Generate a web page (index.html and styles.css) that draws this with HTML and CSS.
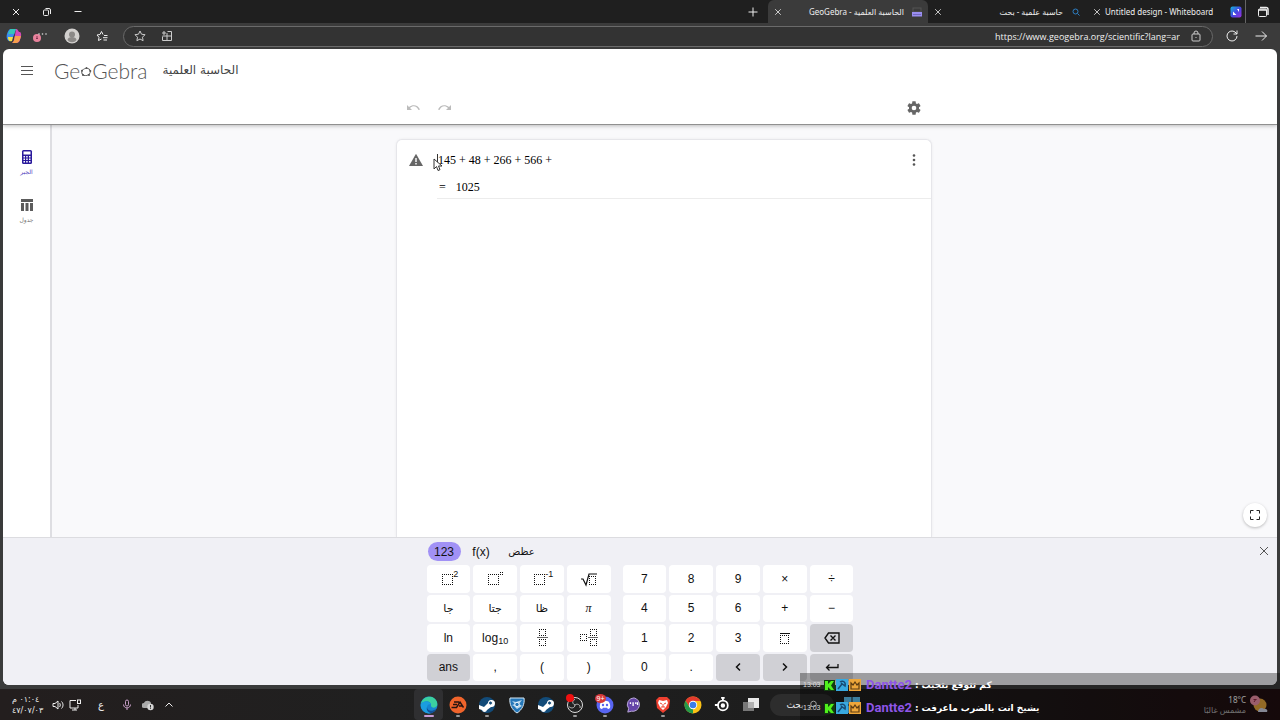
FILE: index.html
```html
<!DOCTYPE html>
<html lang="ar">
<head>
<meta charset="utf-8">
<title>الحاسبة العلمية - GeoGebra</title>
<link rel="stylesheet" href="styles.css">
</head>
<body>
<header class="tabbar">
  <div class="window-controls">
    <button aria-label="إغلاق"><svg class="i10" viewBox="0 0 10 10"><path d="M2 2l6 6M8 2l-6 6"/></svg></button>
    <button aria-label="استعادة"><svg class="i10" viewBox="0 0 10 10"><rect x="1.500" y="3" width="5" height="5.500" rx="1"/><path d="M3.500 1.500h3.500a1.500 1.500 0 0 1 1.500 1.500v4"/></svg></button>
    <button aria-label="تصغير"><svg class="i10" viewBox="0 0 10 10"><path d="M1.500 4.500h7"/></svg></button>
  </div>
  <nav class="tabs">
    <button class="new-tab" aria-label="جديد"><svg class="i10" viewBox="0 0 10 10"><path d="M5 .5v9M.5 5h9"/></svg></button>
    <div class="tab active">
      <button aria-label="إغلاق"><svg class="i8" viewBox="0 0 10 10"><path d="M1.500 1.500l7 7M8.500 1.500l-7 7"/></svg></button>
      <span class="tab-title" dir="rtl">الحاسبة العلمية - GeoGebra</span>
      <svg class="i10" viewBox="0 0 10 10"><rect x="1" y="1" width="8" height="4" stroke="#555"/><path d="M0 5h10v4.500H0z" fill="#9a8ef0" stroke="none"/><path d="M1.500 7.500h7" stroke="#4a4090" stroke-dasharray="1 1"/></svg>
    </div>
    <div class="tab">
      <button aria-label="إغلاق"><svg class="i8" viewBox="0 0 10 10"><path d="M1.500 1.500l7 7M8.500 1.500l-7 7"/></svg></button>
      <span class="tab-title" dir="rtl">حاسبة علمية - بحث</span>
      <svg class="i10" viewBox="0 0 10 10" stroke="#2d7fc4"><circle cx="4.500" cy="4.500" r="2.500"/><path d="M6.500 6.500l2 2"/></svg>
    </div>
    <div class="tab">
      <button aria-label="إغلاق"><svg class="i8" viewBox="0 0 10 10"><path d="M1.500 1.500l7 7M8.500 1.500l-7 7"/></svg></button>
      <span class="tab-title start">Untitled design - Whiteboard</span>
      <svg class="i12" viewBox="0 0 12 12" stroke="none"><defs><linearGradient id="wb" x1="0" x2="1" y2="1"><stop stop-color="#12b8dd"/><stop offset=".5" stop-color="#4548e0"/><stop offset="1" stop-color="#9b2fe0"/></linearGradient></defs><rect x=".5" y=".5" width="11" height="11" rx="2" fill="url(#wb)"/><path d="M3 9V5.500L6.500 9zM7 3h2v3z" fill="#fff"/></svg>
    </div>
    <button class="workspace" aria-label="مساحات العمل"><svg class="i12" viewBox="0 0 12 12"><rect x="1.500" y="3" width="8" height="7.500" rx="1"/><path d="M3 1.500h6A2 2 0 0 1 11 3.500V9M1.500 4h8" stroke-width="1.500"/></svg></button>
  </nav>
</header>
<div class="addressbar">
  <div class="address-left">
    <button aria-label="Copilot"><svg class="i16" viewBox="0 0 16 16" stroke="none"><path d="M5 1h5l-2 6-3 6C1 14 0 9 1 6c1-3 2-5 4-5z" fill="#3b8df0"/><path d="M5 1h5l-2 5H2c1-3 2-5 3-5z" fill="#35c5b8"/><path d="M10 1c2 0 2 2 3 3h1c2 1 1 6 0 8-1 3-3 3-5 3H6c2-1 2-4 3-8z" fill="#d44ab8"/><path d="M9 8h6c-1 4-2 7-5 7H6c2-1 2-3 3-7z" fill="#f6a04b"/><path d="M2 9h5l-1 4c-3 1-4-1-4-4z" fill="#efe04a"/></svg></button>
    <button aria-label="المزيد"><svg class="i16" viewBox="0 0 16 16" stroke="none"><circle cx="5" cy="10" r="4" fill="#e8829c"/><path d="M5 8v3M4 10l1 1 1-1" stroke="#833450" fill="none"/><circle cx="7" cy="6" r=".8" fill="#ddd"/><circle cx="10.500" cy="6" r=".8" fill="#ddd"/><circle cx="14" cy="6" r=".8" fill="#ddd"/></svg></button>
    <button aria-label="الحساب"><svg class="i16" viewBox="0 0 16 16" stroke="none"><circle cx="8" cy="8" r="7.500" fill="#d2d0ce"/><circle cx="8" cy="6.500" r="3" fill="#8b8987"/><path d="M3.500 12c0-4 9-4 9 0-2 3-7 3-9 0z" fill="#8b8987"/></svg></button>
    <button aria-label="المفضلة"><svg class="i12" viewBox="0 0 12 12"><path d="M7 4.500L5.500 1.500 4 4.500 1 5l2 2.300-.5 3.200L5.500 9M8 5.500h3.500M7 7.700h4.500M7.500 10H11"/></svg></button>
  </div>
  <div class="url-box">
    <button aria-label="إضافة إلى المفضلة"><svg class="i12" viewBox="0 0 12 12"><path d="M6 1l1.500 3.200 3.500.5-2.500 2.500.6 3.500L6 9l-3.100 1.700.6-3.500L1 4.700l3.500-.5z"/></svg></button>
    <button aria-label="تطبيق"><svg class="i12" viewBox="0 0 12 12"><path d="M1.500 6.500v4h9v-9h-4M6 3v7.500M1.500 6H10.500M3 1v4M1 3h4"/></svg></button>
    <input class="url" aria-label="العنوان" value="https://www.geogebra.org/scientific?lang=ar">
    <svg class="i12" viewBox="0 0 12 12"><rect x="2" y="4" width="8" height="7" rx="1"/><path d="M4 4V3a2 2 0 0 1 4 0v1M6 7v1"/></svg>
  </div>
  <div class="address-right">
    <button aria-label="تحديث"><svg class="i14" viewBox="0 0 14 14"><path d="M12 7a5 5 0 1 1-2-4l2 2M12 1.500V5H8.500"/></svg></button>
    <button aria-label="رجوع"><svg class="i14" viewBox="0 0 14 14"><path d="M1.500 7h11M8 2.500L12.500 7 8 11.500"/></svg></button>
  </div>
</div>

<main class="page">
  <header class="app-header">
    <div class="brand-row">
      <button class="menu" aria-label="القائمة"><svg class="i12" viewBox="0 0 12 12"><path d="M0 2.500h12M0 6.500h12M0 10.500h12"/></svg></button>
      <a class="logo" href="#" aria-label="GeoGebra"><span>Ge</span><svg class="logo-o" viewBox="0 0 12 12"><ellipse cx="6" cy="6" rx="4.300" ry="3.500" transform="rotate(-15 6 6)"/><g fill="#555" stroke="none"><circle cx="6.500" cy="2" r="1"/><circle cx="10.300" cy="5" r="1"/><circle cx="9" cy="9" r="1"/><circle cx="3" cy="9" r="1"/><circle cx="2" cy="4.800" r="1"/></g></svg><span>Gebra</span></a>
      <h1 class="app-name" dir="rtl">الحاسبة العلمية</h1>
    </div>
    <div class="tools-row">
      <div class="tools">
        <button aria-label="تراجع"><svg class="i16" viewBox="0 0 16 16"><path d="M2 5v5h5L5 8c3-3 7-2 8.500 2l1.500-.5C13 4.500 7.500 4 4 7z" fill="#bbb" stroke="none"/></svg></button>
        <button aria-label="إعادة"><svg class="i16" viewBox="0 0 16 16"><path d="M14 5v5H9l2-2c-3-3-7-2-8.500 2L1 9.500C3 4.500 8.500 4 12 7z" fill="#bbb" stroke="none"/></svg></button>
        <button class="settings" aria-label="الإعدادات"><svg class="i16" viewBox="0 0 24 24" stroke="none"><path fill="#666" d="M19.430 12.980c.04-.32.07-.64.07-.98s-.03-.66-.07-.98l2.110-1.650c.19-.15.24-.42.12-.64l-2-3.460c-.12-.22-.39-.3-.61-.22l-2.490 1c-.52-.4-1.080-.73-1.690-.98l-.38-2.650A.49.49 0 0 0 14 2h-4c-.25 0-.46.18-.49.42l-.38 2.650c-.61.25-1.170.59-1.690.98l-2.490-1c-.23-.09-.49 0-.61.22l-2 3.460c-.13.22-.07.49.12.64l2.110 1.650c-.04.32-.07.65-.07.98s.03.66.07.98l-2.110 1.650c-.19.15-.24.42-.12.64l2 3.460c.12.22.39.3.61.22l2.490-1c.52.4 1.080.73 1.690.98l.38 2.650c.03.24.24.42.49.42h4c.25 0 .46-.18.49-.42l.38-2.650c.61-.25 1.170-.59 1.690-.98l2.490 1c.23.09.49 0 .61-.22l2-3.460c.12-.22.07-.49-.12-.64zM12 15.500a3.500 3.500 0 1 1 0-7 3.500 3.500 0 0 1 0 7z"/></svg></button>
      </div>
    </div>
  </header>
  <div class="workarea">
    <nav class="sidebar">
      <button class="side selected"><svg class="i14" viewBox="0 0 14 14" stroke="none"><rect x="2" y="0" width="10" height="14" rx="1.500" fill="#2a1a9c"/><path d="M3.500 1.500h7v3h-7zM3.500 6h1.500v1.500H3.500zM6.200 6h1.500v1.500H6.200zM9 6h1.500v1.500H9zM3.500 8.500h1.500v1.500H3.500zM6.200 8.500h1.500v1.500H6.200zM9 8.500h1.500v1.500H9zM3.500 11h1.500v1.500H3.500zM6.200 11h1.500v1.500H6.200zM9 11h1.500v1.500H9z" fill="#fff"/></svg><span>الجبر</span></button>
      <button class="side"><svg class="i14" viewBox="0 0 14 14" stroke="none"><path d="M1 1h12v3H1zM1 5h3v8H1zM5.500 5h3v8h-3zM10 5h3v8h-3z" fill="#5c5c5c"/></svg><span>جدول</span></button>
    </nav>
    <div class="canvas">
      <section class="card">
        <div class="expr">
          <svg class="i14" viewBox="0 0 14 14" stroke="none"><path d="M7 .8L14 13H0z" fill="#666"/><path d="M6.300 5h1.400v4H6.300zM6.300 10h1.400v1.400H6.300z" fill="#fff"/></svg>
          <div class="math"><span>145</span><span>+</span><span>48</span><span>+</span><span>266</span><span>+</span><span>566</span><span>+</span></div>
          <button aria-label="المزيد"><svg class="i14" viewBox="0 0 14 14" stroke="none" fill="#555"><circle cx="7" cy="2.500" r="1.300"/><circle cx="7" cy="7" r="1.300"/><circle cx="7" cy="11.500" r="1.300"/></svg></button>
          <svg class="pointer" viewBox="0 0 10 18"><path d="M4.500 0v11" stroke="#333"/><path d="M1 5v10l2.500-2.500L5 16.500l2-.8L5.500 12H9z" fill="#fff" stroke="#333"/></svg>
        </div>
        <div class="result"><span>=</span><span>1025</span></div>
      </section>
      <button class="fullscreen" aria-label="ملء الشاشة"><svg class="i12" viewBox="0 0 12 12"><path d="M1.500 4.500V1.500h3M7.500 1.500h3v3M10.500 7.500v3h-3M4.500 10.500h-3v-3"/></svg></button>
    </div>
  </div>
  <section class="keyboard">
    <button class="close-kb" aria-label="إغلاق"><svg class="i12" viewBox="0 0 12 12"><path d="M2 2l8 8M10 2l-8 8"/></svg></button>
    <div class="kb">
      <div class="kb-tabs"><button class="on">123</button><button>f(x)</button><button class="ar">عظض</button></div>
      <div class="pads">
        <div class="pad four">
          <button aria-label="مربع"><svg class="i20" viewBox="0 0 20 20"><rect class="dot" x="4.500" y="5.500" width="10" height="10"/></svg><sup>2</sup></button>
          <button aria-label="أس"><svg class="i20" viewBox="0 0 20 20"><rect class="dot" x="3.500" y="5.500" width="10" height="10"/><rect class="dot" x="15.500" y="3.500" width="2" height="2"/></svg></button>
          <button aria-label="مقلوب"><svg class="i20" viewBox="0 0 20 20"><rect class="dot" x="4.500" y="5.500" width="10" height="10"/></svg><sup>-1</sup></button>
          <button aria-label="جذر"><svg class="i20" viewBox="0 0 20 20"><path d="M2 10h2l3 6 3-11h8" stroke-width="1.200"/><rect class="dot" x="10.500" y="7.500" width="6" height="8"/></svg></button>
          <button class="ar">جا</button><button class="ar">جتا</button><button class="ar">ظا</button><button class="pi">π</button>
          <button>ln</button><button>log<sub>10</sub></button>
          <button aria-label="كسر"><svg class="i20" viewBox="0 0 20 20"><rect class="dot" x="7.500" y="1.500" width="6" height="6"/><path d="M5 9.500h11" stroke="#666"/><rect class="dot" x="7.500" y="11.500" width="6" height="6"/></svg></button>
          <button aria-label="عدد كسري"><svg class="i20" viewBox="0 0 20 20"><rect class="dot" x="1.500" y="6.500" width="6" height="6"/><rect class="dot" x="11.500" y="1.500" width="6" height="6"/><path d="M9 9.500h10" stroke="#666"/><rect class="dot" x="11.500" y="11.500" width="6" height="6"/></svg></button>
          <button class="gray">ans</button><button>,</button><button>(</button><button>)</button>
        </div>
        <div class="pad five">
          <button>7</button><button>8</button><button>9</button><button>×</button><button>÷</button>
          <button>4</button><button>5</button><button>6</button><button>+</button><button>−</button>
          <button>1</button><button>2</button><button>3</button>
          <button aria-label="دوري"><svg class="i20" viewBox="0 0 20 20"><path d="M5 5.500h10"/><rect class="dot" x="5.500" y="7.500" width="8" height="8"/></svg></button>
          <button class="gray" aria-label="حذف"><svg class="i20" viewBox="0 0 20 20"><path d="M6.500 5h10.500v10H6.500L3 10zM8.500 7.500l5 5M13.500 7.500l-5 5" stroke-width="1.400"/></svg></button>
          <button>0</button><button>.</button>
          <button class="gray" aria-label="يسار"><svg class="i20" viewBox="0 0 20 20"><path d="M12 6.500L8.500 10l3.500 3.500" stroke-width="1.500"/></svg></button>
          <button class="gray" aria-label="يمين"><svg class="i20" viewBox="0 0 20 20"><path d="M8 6.500l3.500 3.500L8 13.500" stroke-width="1.500"/></svg></button>
          <button class="gray" aria-label="إدخال"><svg class="i20" viewBox="0 0 20 20"><path d="M16 7v3.500H4.500M7.500 7.500l-3 3 3 3" stroke-width="1.300"/></svg></button>
        </div>
      </div>
    </div>
  </section>
</main>

<footer class="taskbar">
  <div class="tray">
    <div class="clock"><span dir="rtl">٠١:٠٤ م</span><span>٤٧/٠٧/٠٣</span></div>
    <svg class="i12" viewBox="0 0 12 12"><path d="M1 4.500h2L6 2v8L3 7.500H1zM7.500 4c1 1 1 3 0 4M9.500 2.500c2 2 2 5 0 7"/></svg>
    <svg class="i12 monitor" viewBox="0 0 12 12"><path d="M7 1.500H1v7.500h8V6M3 11h5M6 9v2"/><rect x="8.500" y="1" width="3" height="3.500"/></svg>
    <span class="lang">ع</span>
    <svg class="i12" viewBox="0 0 12 12" stroke="#c9a0c9"><rect x="4.500" y="1" width="3" height="6" rx="1.500"/><path d="M2.500 5.500c0 4.500 7 4.500 7 0M6 9v2"/></svg>
    <svg class="i12" viewBox="0 0 12 12" stroke="none"><path d="M2 9a2.500 2.500 0 0 1 0-5c1-3 6-3 7 0v5z" fill="#aaa"/><circle cx="8.500" cy="8" r="3.200" fill="#d5d5d5"/><path d="M8.500 6v2.500M8.500 9.200v.8" stroke="#333"/></svg>
    <svg class="i12" viewBox="0 0 12 12"><path d="M2.500 7.500L6 4l3.500 3.500"/></svg>
  </div>
  <div class="dock">
    <div class="apps">
      <button class="app current" aria-label="Edge"><svg class="i18" viewBox="0 0 18 18" stroke="none"><circle cx="9" cy="9" r="8.500" fill="#1685d1"/><path d="M1 8C2 2 7 0 11 .8c5 1 7 6 6 9-2 3-6 2-6 0 1-5-7-6-10-1.800z" fill="#3bd0a0"/><path d="M1 8c3-4 9-3 10 .5-2-1-4 0-4 3 0 3 3 5 5 5.500C5 19-.5 13 1 8z" fill="#1b9de0"/><path d="M7 11c0 4 5 5 9 2-1 2-3 4-5 4.200-3-1-5-3-4-6.200z" fill="#124f98"/></svg></button>
      <button class="app run" aria-label="EA"><svg class="i18" viewBox="0 0 18 18" stroke="none"><circle cx="9" cy="9" r="8.500" fill="#f0642b"/><path d="M5 6h5M4 8.500h4M2.500 11.500h5L11 6l3.500 5.500M10 10h4" stroke="#251310" stroke-width="1.400" fill="none"/></svg></button>
      <button class="app run" aria-label="Steam"><svg class="i18" viewBox="0 0 18 18" stroke="none"><circle cx="9" cy="9" r="8" fill="#124b79"/><path d="M1 9l5 2 4-4a3.500 3.500 0 1 1 3 4l-4 3a2.600 2.600 0 0 1-5 0l-3-1z" fill="#fff"/><circle cx="12.500" cy="7" r="2" fill="#124b79" stroke="#fff"/></svg></button>
      <button class="app" aria-label="Rocket League"><svg class="i18" viewBox="0 0 18 18"><path d="M2 2h14c1 6-2 12-7 15C4 14 1 8 2 2z" fill="#2477b9" stroke="#d7e8f4"/><path d="M4 5l4 1 6-2-3 4 3 2-5 3-3-3-2-1 3-1z" fill="#b9d9ee" stroke="none"/><circle cx="9" cy="8.500" r="2.200" fill="#2477b9" stroke="#e8f3fa"/></svg></button>
      <button class="app" aria-label="Steam"><svg class="i18" viewBox="0 0 18 18" stroke="none"><circle cx="9" cy="9" r="8" fill="#124b79"/><path d="M1 9l5 2 4-4a3.500 3.500 0 1 1 3 4l-4 3a2.600 2.600 0 0 1-5 0l-3-1z" fill="#fff"/><circle cx="12.500" cy="7" r="2" fill="#124b79" stroke="#fff"/></svg></button>
      <button class="app run" aria-label="OBS"><svg class="i18" viewBox="0 0 18 18"><circle cx="9" cy="9" r="7.500" fill="#222" stroke="#ddd"/><path d="M9 9C6 8 6 4 9 3.500M9 9c2-2 6 0 5 3M9 9c0 3-4 4-6 1.500" stroke="#bbb"/></svg><i class="badge"></i></button>
      <button class="app run" aria-label="Discord"><svg class="i18" viewBox="0 0 18 18" stroke="none"><circle cx="9" cy="9" r="8.500" fill="#5865f2"/><path d="M5.500 5.500c2-1 5-1 7 0 1.500 2 2 4 1.500 6.500-2 1.500-2.500 1-3-.2H7c-.5 1.200-1 1.700-3 .2-.5-2.500 0-4.500 1.500-6.500z" fill="#fff"/><circle cx="7" cy="9" r="1.200" fill="#5865f2"/><circle cx="11" cy="9" r="1.200" fill="#5865f2"/></svg><span class="badge count">9+</span></button>
      <button class="app" aria-label="Chat"><svg class="i16" viewBox="0 0 18 18"><path d="M9 1a7.500 7.500 0 1 1-3 15l-4 1 1-4A7.500 7.500 0 0 1 9 1z" fill="#6544a8" stroke="#c7b6e5"/><path d="M5 6v2M8 6v4M11 6v2M13 6v3" stroke="#fff" stroke-width="1.500"/></svg></button>
      <button class="app run" aria-label="Brave"><svg class="i18" viewBox="0 0 18 18" stroke="none"><path d="M5 1h8l3 3-1 8-6 5-6-5-1-8z" fill="#ef4030"/><path d="M5 4l4 1 4-1 1 3-2 4-3 3-3-3-2-4z" fill="#fff"/><path d="M6 7l2 1M12 7l-2 1M9 8v3M7 11h4" stroke="#ef4030"/></svg></button>
      <button class="app" aria-label="Chrome"><svg class="i18" viewBox="0 0 18 18" stroke="none"><circle cx="9" cy="9" r="8.500" fill="#fbc116"/><path d="M1.600 4.800A8.500 8.500 0 0 1 16.400 5H9L5.500 11z" fill="#e33b2e"/><path d="M1.600 4.800L5.500 11l3.500 2v4.500A8.500 8.500 0 0 1 1.600 4.800z" fill="#229a4b"/><circle cx="9" cy="9" r="4.200" fill="#fff"/><circle cx="9" cy="9" r="3.300" fill="#3b7de8"/></svg></button>
      <button class="app" aria-label="SteelSeries"><svg class="i16" viewBox="0 0 18 18" stroke="#fff" stroke-width="2"><circle cx="10" cy="9.500" r="5.500"/><circle cx="10" cy="9.500" r="1.500" fill="#fff"/><path d="M1 9h4M10 1v3M8 1h4"/></svg></button>
      <button class="app" aria-label="عرض المهام"><svg class="i18" viewBox="0 0 18 18" stroke="none"><path d="M1 6h11v9H1z" fill="#777"/><path d="M6 2h11v10H6z" fill="#e8e8e8"/><path d="M6 6h6v6H6z" fill="#b0b0b0"/></svg></button>
    </div>
    <button class="search"><span>بحث</span><svg class="i10" viewBox="0 0 10 10"><circle cx="5.500" cy="4" r="2.800"/><path d="M3.500 6L1 8.500"/></svg></button>
    <button class="start" aria-label="ابدأ"><svg class="i16" viewBox="0 0 16 16" stroke="none"><path d="M0 0h7.500v7.500H0zM8.500 0H16v7.500H8.500zM0 8.500h7.500V16H0zM8.500 8.500H16V16H8.500z" fill="#5cc0ee"/></svg></button>
  </div>
  <div class="weather">
    <div><span>18°C</span><span class="dim" dir="rtl">مشمس غالبًا</span></div>
    <svg class="i20" viewBox="0 0 20 20" stroke="none"><circle cx="11" cy="10" r="6.500" fill="#e0a23a"/><path d="M9 17c0-4 4-5 6-3 3-1 4 2 3 3z" fill="#c9cde0"/><circle cx="6" cy="5.500" r="5" fill="#ea8ea4"/><path d="M5 7l2-3M4.500 4.500h3" stroke="#8e2944"/></svg>
  </div>
</footer>

<aside class="chat">
  <p><time>13:03</time><svg class="badges" viewBox="0 0 38 12" stroke="none"><path d="M0 1h11v11H0z" fill="#123c10"/><path d="M1 2h3v3l3-3h3L7 6.500l3 4.500H7L4 8v3H1z" fill="#50f01c"/><path d="M12 0h12v12H12z" fill="#38a9e0"/><path d="M14 10l4-5M16 3c3-2 6 0 5 4l-4-3" fill="none" stroke="#174a74" stroke-width="1.500"/><path d="M25 0h12v12H25z" fill="#eda63a"/><path d="M27 4l2 2 2-3 2 3 2-2v6h-8z" fill="none" stroke="#5b3b12" stroke-width="1.200"/></svg><b>Dantte2</b><span>:</span><span dir="rtl">كم تتوقع بتجيب</span></p>
  <p><time>13:03</time><svg class="badges" viewBox="0 0 38 12" stroke="none"><path d="M0 1h11v11H0z" fill="#123c10"/><path d="M1 2h3v3l3-3h3L7 6.500l3 4.500H7L4 8v3H1z" fill="#50f01c"/><path d="M12 0h12v12H12z" fill="#38a9e0"/><path d="M14 10l4-5M16 3c3-2 6 0 5 4l-4-3" fill="none" stroke="#174a74" stroke-width="1.500"/><path d="M25 0h12v12H25z" fill="#eda63a"/><path d="M27 4l2 2 2-3 2 3 2-2v6h-8z" fill="none" stroke="#5b3b12" stroke-width="1.200"/></svg><b>Dantte2</b><span>:</span><span dir="rtl">يشيخ انت بالضرب ماعرفت</span></p>
</aside>
</body>
</html>
```
FILE: styles.css
```css
* { box-sizing: border-box; }
body {
  margin: 0;
  min-height: 100vh;
  display: flex;
  flex-direction: column;
  position: relative;
  background: #3a3b3b;
  font-family: "Liberation Sans", "DejaVu Sans", sans-serif;
  font-size: 12px;
  color: #eee;
}
button {
  background: none;
  border: 0;
  padding: 0;
  margin: 0;
  color: inherit;
  font: inherit;
  display: flex;
  align-items: center;
  justify-content: center;
}
svg { display: block; flex: none; }
svg:not([fill]) { fill: none; }
svg:not([stroke]) { stroke: currentColor; }
.i8 { width: 8px; height: 8px; }
.i10 { width: 10px; height: 10px; }
.i12 { width: 12px; height: 12px; }
.i14 { width: 14px; height: 14px; }
.i16 { width: 16px; height: 16px; }
.i18 { width: 18px; height: 18px; }
.i20 { width: 20px; height: 20px; }

/* Browser chrome */
.tabbar {
  height: 23px;
  display: flex;
  justify-content: space-between;
  background: #1f1f1f;
}
.window-controls { display: flex; }
.window-controls button { width: 31px; }
.tabs { display: flex; }
.new-tab { width: 31px; }
.tab {
  width: 159px;
  display: flex;
  align-items: center;
  gap: 4px;
  padding: 0 6px;
}
.tab.active { width: 160px; background: #3b3b3b; border-radius: 6px 6px 0 0; }
.tab-title {
  flex: 1;
  font: 8px "Noto Sans", "DejaVu Sans", sans-serif;
  white-space: nowrap;
}
.tab-title[dir="rtl"] { padding-right: 4px; }
.tab-title.start { text-align: left; }
.tab:last-of-type { padding-right: 3px; border-right: 1px solid #666; }
.workspace { width: 34px; }
.addressbar {
  height: 26px;
  display: flex;
  align-items: center;
  background: #3b3b3b;
}
.address-left { display: flex; width: 123px; padding-left: 6px; gap: 16px; align-items: center; }
.address-left button:nth-child(2) { margin-left: -6px; }
.url-box {
  flex: 1;
  height: 21px;
  display: flex;
  align-items: center;
  gap: 15px;
  padding: 0 10px;
  border: 1px solid #6a6a6a;
  border-radius: 11px;
  background: #333;
  color: #ccc;
}
.url {
  flex: 1;
  min-width: 0;
  margin-right: -5px;
  background: none;
  border: 0;
  padding: 0;
  color: #f0f0f0;
  font: 9px "Open Sans", sans-serif;
  text-align: right;
}
.address-right { display: flex; width: 67px; padding-left: 12px; gap: 15px; }

/* Calculator page */
.page {
  flex: 1;
  margin: 0 3px 4px;
  display: flex;
  flex-direction: column;
  overflow: hidden;
  border-radius: 6px;
  background: #fff;
  color: #222;
}
.app-header {
  height: 76px;
  position: relative;
  z-index: 1;
  border-bottom: 1px solid #909090;
  box-shadow: 0 1px 4px rgba(0, 0, 0, .25);
}
.brand-row { display: flex; align-items: center; height: 42px; padding-left: 18px; }
.menu { color: #555; }
.logo {
  display: flex;
  align-items: center;
  margin-left: 21px;
  color: #555;
  font: 300 21px Lato, sans-serif;
  text-decoration: none;
}
.logo-o { width: 12px; height: 12px; margin-top: 4px; }
.app-name { margin: 0 0 0 15px; font: 12px "DejaVu Sans", sans-serif; color: #444; }
.tools-row { padding-left: 48px; }
.tools {
  width: 534px;
  max-width: 100%;
  height: 34px;
  margin: 0 auto;
  padding: 0 9px 0 8px;
  display: flex;
  align-items: center;
  gap: 16px;
}
.settings { margin-left: auto; }
.workarea { flex: 1; display: flex; }
.sidebar {
  width: 49px;
  padding-top: 25px;
  display: flex;
  flex-direction: column;
  align-items: center;
  gap: 22px;
  border-right: 2px solid #dedee2;
}
.side { flex-direction: column; gap: 3px; font: 6px "DejaVu Sans", sans-serif; line-height: 9px; color: #777; }
.side.selected { color: #5040c0; }
.canvas {
  flex: 1;
  position: relative;
  display: flex;
  justify-content: center;
  padding: 14px 1px 0 0;
  background: #f9f9fb;
}
.card {
  width: 536px;
  max-width: 100%;
  background: #fff;
  border: 1px solid #e6e6ea;
  border-bottom: 0;
  border-radius: 6px 6px 0 0;
  box-shadow: 0 0 3px rgba(0, 0, 0, .06);
}
.expr {
  position: relative;
  height: 40px;
  display: flex;
  align-items: center;
  padding: 0 10px 0 12px;
}
.math { flex: 1; margin-left: 15px; display: flex; gap: 3px; }
.math, .result { font: 12px "Liberation Serif", serif; color: #000; }
.pointer { position: absolute; left: 36px; top: 14px; width: 10px; height: 18px; }
.result {
  margin-left: 40px;
  padding-left: 2px;
  height: 19px;
  display: flex;
  gap: 10px;
  border-bottom: 1px solid #ececec;
}
.fullscreen {
  position: absolute;
  right: 10px;
  bottom: 10px;
  width: 24px;
  height: 24px;
  border-radius: 50%;
  background: #fff;
  box-shadow: 0 1px 3px rgba(0, 0, 0, .25);
}

/* Keypad */
.keyboard {
  position: relative;
  display: flex;
  justify-content: center;
  padding: 4px 0;
  border-top: 1px solid #dcdce0;
  background: #f0f0f5;
}
.close-kb { position: absolute; right: 7px; top: 7px; color: #555; }
.kb { width: 427px; }
.kb-tabs { display: flex; gap: 4px; height: 19px; padding-left: 1px; color: #111; }
.kb-tabs button { width: 33px; border-radius: 10px; }
.kb-tabs .on { background: #a191f5; }
.ar { font-family: "DejaVu Sans", sans-serif; font-size: 10px; }
.kb-tabs .ar { width: 40px; }
.pads { display: flex; gap: 12px; padding-top: 4px; }
.pad { height: 116px; display: grid; grid-template-rows: repeat(4, 1fr); gap: 2px 3px; }
.four { flex: 184; grid-template-columns: repeat(4, 1fr); }
.five { flex: 231; grid-template-columns: repeat(5, 1fr); }
.pad button {
  min-width: 0;
  border-radius: 4px;
  background: #fff;
  color: #111;
  font-size: 12px;
}
.pad .ar { font-size: 11px; }
.pad .gray { background: #d0d0d5; }
.pad .pi { font-family: "Liberation Serif", serif; font-style: italic; }
.pad sup, .pad sub { font-size: 9px; line-height: 10px; }
.pad sup { align-self: flex-start; margin: 4px 0 0 -5px; }
.pad sub { margin-top: 7px; }
.dot { stroke-dasharray: 1 1; stroke-dashoffset: .5; shape-rendering: crispEdges; }

/* Taskbar */
.taskbar {
  height: 31px;
  display: grid;
  grid-template-columns: 1fr 452px 1fr;
  background: linear-gradient(90deg, #231e1e, #202020 30%, #1c1c1c 70%, #200e10);
}
.tray { display: flex; align-items: center; gap: 5px; padding-left: 12px; }
.clock { width: 34px; font: 8px "DejaVu Sans", sans-serif; line-height: 11px; display: flex; flex-direction: column; margin-right: 1px; white-space: nowrap; }
.clock span:first-child { text-align: left; }
.lang { width: 30px; text-align: center; font: 10px "DejaVu Sans", sans-serif; }
.tray svg { margin-right: 4px; }
.tray .monitor, .tray .clock + svg { margin-right: 0; }
.dock { display: grid; grid-template-columns: 352px 64px 28px; column-gap: 4px; align-items: center; }
.apps { display: grid; grid-template-columns: repeat(12, 1fr); align-self: stretch; }
.app { position: relative; }
.app.current { background: #2f2f31; border-radius: 4px; }
.app.run::after, .app.current::after {
  content: "";
  position: absolute;
  bottom: 3px;
  width: 4px;
  height: 2px;
  border-radius: 1px;
  background: #999;
}
.app.current::after { width: 10px; background: #c79bd6; }
.badge { position: absolute; left: 5px; top: 5px; width: 8px; height: 8px; border-radius: 50%; background: #f01010; }
.badge.count { width: 11px; height: 9px; background: #d83a3a; color: #fff; font-size: 7px; line-height: 9px; }
.search { height: 22px; border-radius: 11px; background: #2d2d2d; gap: 4px; font: 9px "DejaVu Sans", sans-serif; }
.weather { display: flex; align-items: center; justify-content: flex-end; gap: 3px; padding-right: 11px; font: 8px "Noto Sans", "DejaVu Sans", sans-serif; }
.weather div { display: flex; flex-direction: column; text-align: right; line-height: 10px; }
.weather .dim { color: #aaa; text-align: start; }

/* Stream chat laid over the desktop */
.chat {
  position: absolute;
  right: 0;
  bottom: 0;
  width: 480px;
  height: 47px;
  padding-left: 3px;
  background: rgba(0, 0, 0, .34);
}
.chat p { margin: 0; height: 23px; display: flex; align-items: center; white-space: nowrap; font: bold 12px "DejaVu Sans", sans-serif; color: #fff; }
.chat time { width: 21px; font: 7px "Liberation Sans", sans-serif; color: #ddd; }
.badges { width: 38px; height: 12px; }
.chat b { margin-left: 4px; font: bold 13px Roboto, sans-serif; color: #8f55e8; }
.chat span { margin-left: 3px; font-size: 9px; }
```
